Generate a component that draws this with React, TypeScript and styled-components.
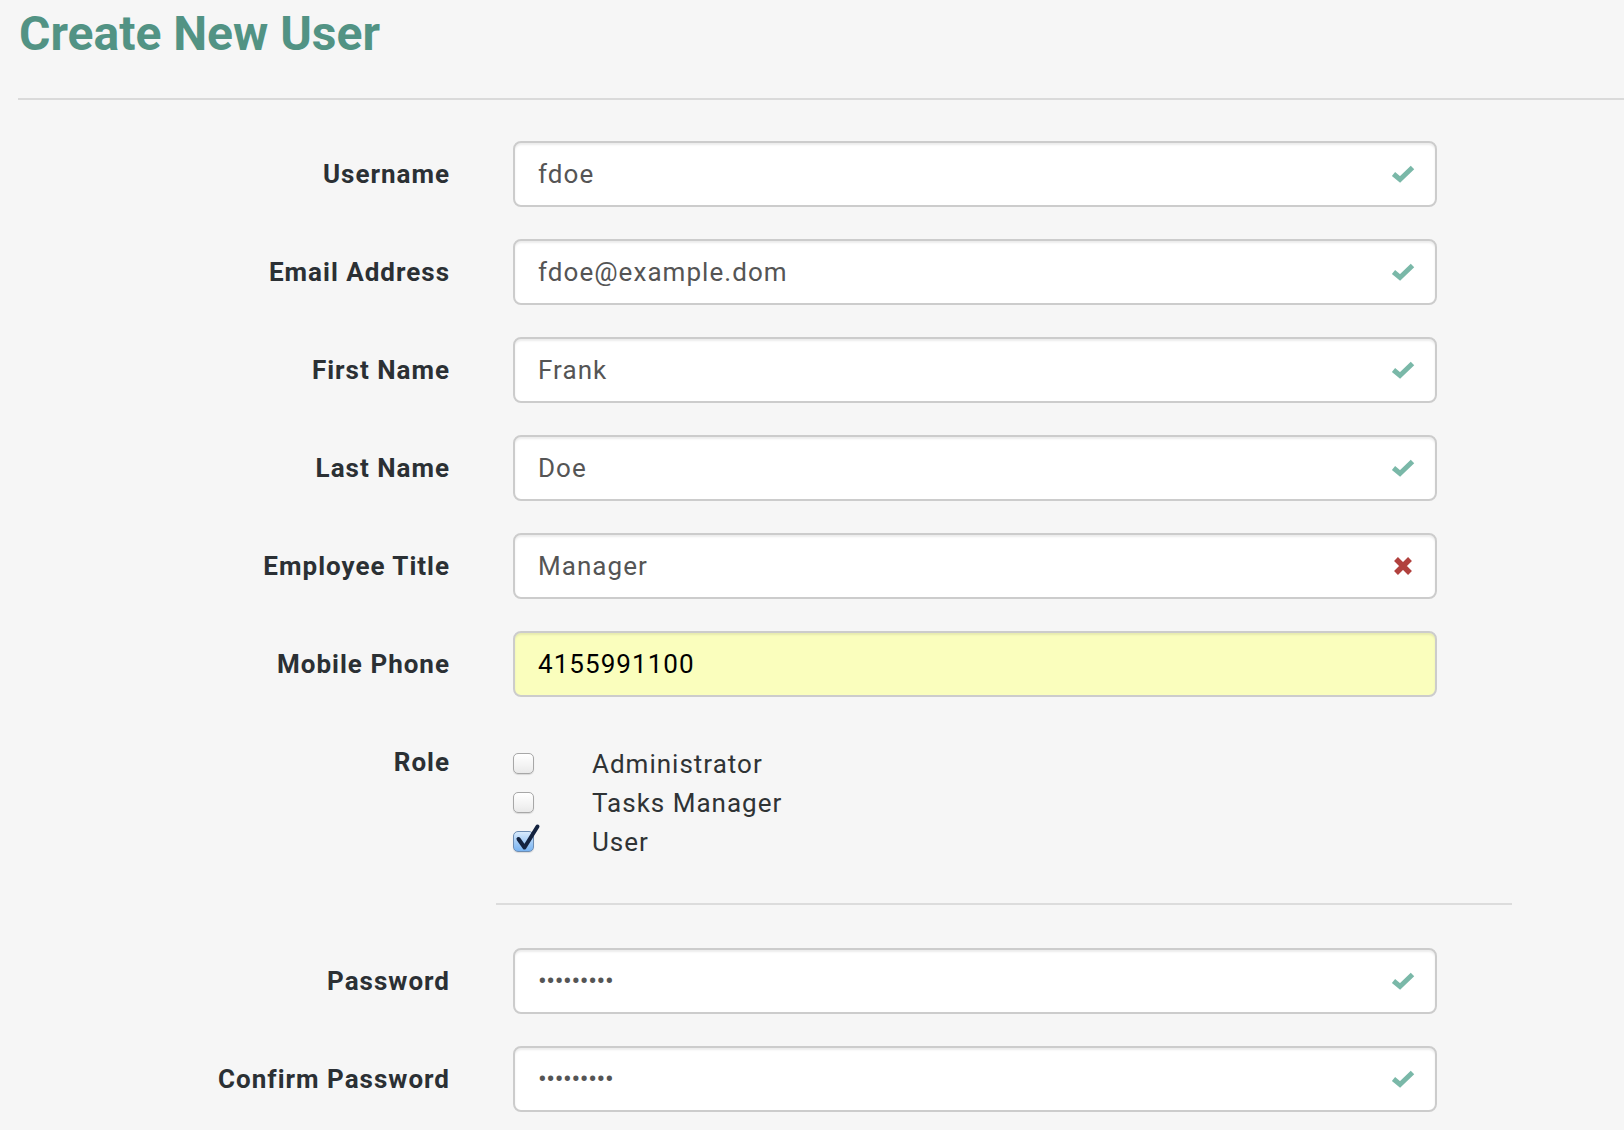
import React from "react";
import styled, { createGlobalStyle } from "styled-components";

const GlobalStyle = createGlobalStyle`
  html, body {
    margin: 0;
    padding: 0;
    background: #f6f6f6;
  }
  body {
    font-family: Roboto, "Liberation Sans", Arial, sans-serif;
    -webkit-font-smoothing: antialiased;
  }
`;

const Page = styled.div`
  padding: 0 0 20px 18px;
  box-sizing: border-box;
  min-height: 1130px;
`;

const Title = styled.h1`
  margin: 0;
  padding-top: 6px;
  padding-left: 1px;
  font-size: 48px;
  line-height: 56px;
  font-weight: 700;
  color: #529384;
`;

const HeaderRule = styled.div`
  height: 2px;
  background: #dadada;
  margin-top: 36px;
`;

const Form = styled.form`
  margin-top: 41px;
  display: flex;
  flex-direction: column;
`;

const Row = styled.div<{ $last?: boolean }>`
  display: grid;
  grid-template-columns: 432px 924px;
  column-gap: 63px;
  margin-bottom: ${(p) => (p.$last ? "0" : "32px")};
`;

const Label = styled.label`
  height: 66px;
  display: flex;
  align-items: center;
  justify-content: flex-end;
  align-self: start;
  font-size: 26px;
  font-weight: 700;
  letter-spacing: 1px;
  color: #2b3034;
`;

const Field = styled.div<{ $autofill?: boolean }>`
  height: 66px;
  box-sizing: border-box;
  border: 2px solid #cccccc;
  border-radius: 8px;
  background: ${(p) => (p.$autofill ? "#fafebd" : "#ffffff")};
  box-shadow: inset 0 2px 2px rgba(0, 0, 0, 0.075);
  padding: 0 20px 0 23px;
  display: flex;
  align-items: center;
  justify-content: space-between;
  font-size: 26px;
  color: ${(p) => (p.$autofill ? "#000000" : "#555555")};
`;

const Value = styled.span<{ $secret?: boolean }>`
  white-space: nowrap;
  letter-spacing: ${(p) => (p.$secret ? "-0.4px" : "1.05px")};
`;

const IconBox = styled.span`
  display: flex;
  align-items: center;
  justify-content: center;
  width: 24px;
  height: 24px;
`;

const RoleList = styled.div`
  padding-top: 15px;
  display: flex;
  flex-direction: column;
`;

const RoleItem = styled.label`
  display: flex;
  align-items: center;
  gap: 58px;
  height: 39px;
  font-size: 26px;
  letter-spacing: 1px;
  color: #2f3335;
`;

const Box = styled.span<{ $checked?: boolean }>`
  position: relative;
  flex: none;
  width: 21px;
  height: 21px;
  box-sizing: border-box;
  border-radius: 5px;
  border: 1px solid ${(p) => (p.$checked ? "#6d8db3" : "#a7a7a7")};
  background: ${(p) =>
    p.$checked
      ? "linear-gradient(#d9ebfd 0%, #a6cdf6 50%, #79b4f2 100%)"
      : "linear-gradient(#ffffff 0%, #f3f3f3 60%, #e9e9e9 100%)"};
  box-shadow: 0 1px 1px rgba(0, 0, 0, 0.12);
`;

const CheckMark = styled.svg`
  position: absolute;
  left: 1px;
  top: -7px;
  width: 26px;
  height: 26px;
  overflow: visible;
`;

const SectionRule = styled.div`
  height: 2px;
  background: #dcdcdc;
  width: 1016px;
  margin: 42px 0 43px 478px;
`;

const OkIcon = () => (
  <IconBox>
    <svg width="24" height="20" viewBox="0 0 24 20">
      <polyline
        points="2.5,10 9,15.5 21.5,3.5"
        fill="none"
        stroke="#7ab8a8"
        strokeWidth="5"
        strokeLinejoin="miter"
      />
    </svg>
  </IconBox>
);

const ErrIcon = () => (
  <IconBox>
    <svg width="20" height="20" viewBox="0 0 20 20">
      <path
        d="M3 3 L17 17 M17 3 L3 17"
        stroke="#b1413e"
        strokeWidth="5.5"
        strokeLinecap="butt"
      />
    </svg>
  </IconBox>
);

type Status = "ok" | "error" | "none";

const InputRow = ({
  label,
  value,
  status = "ok",
  autofill,
  secret,
}: {
  label: string;
  value: string;
  status?: Status;
  autofill?: boolean;
  secret?: boolean;
}) => (
  <Row>
    <Label>{label}</Label>
    <Field $autofill={autofill}>
      <Value $secret={secret}>{value}</Value>
      {status === "ok" && <OkIcon />}
      {status === "error" && <ErrIcon />}
    </Field>
  </Row>
);

const RoleCheck = ({ label, checked }: { label: string; checked?: boolean }) => (
  <RoleItem>
    <Box $checked={checked}>
      {checked && (
        <CheckMark viewBox="0 0 26 26">
          <path
            d="M3.5 14 L9.5 22.5 L22.5 1.5"
            fill="none"
            stroke="#14233f"
            strokeWidth="4"
            strokeLinecap="round"
            strokeLinejoin="round"
          />
        </CheckMark>
      )}
    </Box>
    <span>{label}</span>
  </RoleItem>
);

export default function App() {
  return (
    <>
      <GlobalStyle />
      <Page>
        <Title>Create New User</Title>
        <HeaderRule />
        <Form>
          <InputRow label="Username" value="fdoe" />
          <InputRow label="Email Address" value="fdoe@example.dom" />
          <InputRow label="First Name" value="Frank" />
          <InputRow label="Last Name" value="Doe" />
          <InputRow label="Employee Title" value="Manager" status="error" />
          <InputRow label="Mobile Phone" value="4155991100" status="none" autofill />
          <Row $last>
            <Label>Role</Label>
            <RoleList>
              <RoleCheck label="Administrator" />
              <RoleCheck label="Tasks Manager" />
              <RoleCheck label="User" checked />
            </RoleList>
          </Row>
          <SectionRule />
          <InputRow label="Password" value="•••••••••" secret />
          <InputRow label="Confirm Password" value="•••••••••" secret />
        </Form>
      </Page>
    </>
  );
}
